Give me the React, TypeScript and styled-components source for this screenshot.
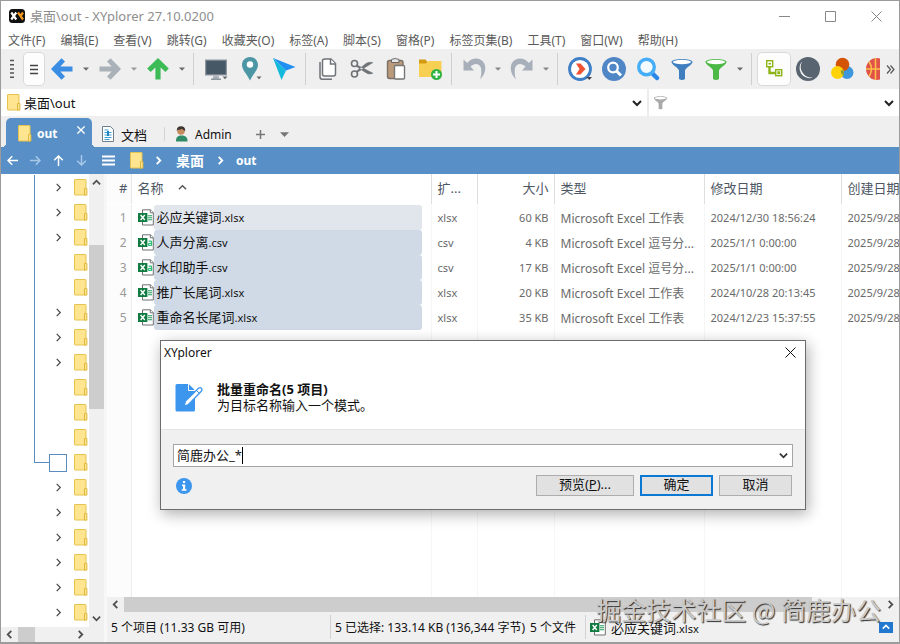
import React from "react";
import styled, { createGlobalStyle, css } from "styled-components";

const Global = createGlobalStyle`
  * { box-sizing: border-box; }
  body {
    margin: 0;
    font-family: "Noto Sans", "Noto Sans CJK SC", sans-serif;
    font-size: 12px;
    color: #111;
  }
  button, input { font: inherit; color: inherit; }
  button { padding: 0; border: 0; background: none; }
  svg { display: block; flex: none; }
`;

/* ---------- window frame ---------- */

const Window = styled.div`
  position: relative;
  display: flex;
  flex-direction: column;
  height: 100vh;
  border: 1px solid #9b9b9b;
  border-bottom-width: 2px;
  background: #fff;
  overflow: hidden;
`;

const TitleBar = styled.header`
  display: flex;
  align-items: center;
  height: 30px;
  flex: none;
  padding-left: 8px;
  color: #8e8e8e;
`;

const Title = styled.h1`
  flex: 1;
  margin: 0 0 0 5px;
  font-size: 13px;
  line-height: 16px;
  font-weight: 400;
`;

const CaptionButton = styled.button`
  display: flex;
  justify-content: center;
  align-items: center;
  width: 46px;
  height: 28px;
`;

const MenuBar = styled.nav`
  display: flex;
  align-items: flex-end;
  height: 18px;
  flex: none;
  padding-left: 7px;
  gap: 15px;
  color: #5a5a5a;
`;

const MenuItem = styled.button`
  white-space: nowrap;
  line-height: 16px;
`;

/* ---------- toolbar ---------- */

const Toolbar = styled.div`
  display: flex;
  align-items: center;
  height: 40px;
  flex: none;
  background: #efefef;
  overflow: hidden;
`;

const ToolButton = styled.button<{ $w?: number; $raised?: boolean }>`
  display: flex;
  align-items: center;
  justify-content: ${(p) => (p.$w === 21 ? "flex-start" : "center")};
  width: ${(p) => p.$w ?? 34}px;
  height: 34px;
  flex: none;
  overflow: hidden;
  ${(p) =>
    p.$w === 21 &&
    css`
      padding-left: 7px;
    `}
  ${(p) =>
    p.$raised &&
    css`
      background: #fdfdfd;
      border: 1px solid #d9d9d9;
      border-radius: 5px;
    `}
`;

const ToolSeparator = styled.span`
  width: 10px;
  height: 32px;
  flex: none;
  background: linear-gradient(#cfcfcf, #cfcfcf) 4px 0 / 1px 100% no-repeat;
`;

const Overflow = styled(ToolButton)`
  margin-left: auto;
  justify-content: center;
  color: #444;
`;

/* ---------- address row ---------- */

const AddressRow = styled.div`
  display: flex;
  height: 27px;
  flex: none;
  background: #fff;
`;

const Combo = styled.div<{ $grow?: boolean }>`
  display: flex;
  align-items: center;
  min-width: 0;
  flex: ${(p) => (p.$grow ? "1" : "0 0 252px")};
  padding: 0 4px 0 6px;
  gap: 3px;
  & + & {
    border-left: 2px solid #ececec;
    padding-left: 4px;
  }
`;

const ComboInput = styled.input`
  flex: 1;
  min-width: 0;
  border: 0;
  padding: 0 0 1px;
  outline: 0;
  background: none;
  font-size: 13px;
`;

const IconButton = styled.button<{ $w?: number }>`
  display: flex;
  align-items: center;
  justify-content: center;
  flex: none;
  width: ${(p) => p.$w ?? 12}px;
`;

/* ---------- tabs ---------- */

const TabStrip = styled.div`
  display: flex;
  align-items: flex-end;
  height: 31px;
  flex: none;
  padding-left: 5px;
  background: #efefef;
`;

const ActiveTab = styled.div`
  position: relative;
  display: flex;
  align-items: flex-start;
  width: 86px;
  height: 29px;
  padding: 0 7px 0 12px;
  border-radius: 5px 5px 0 0;
  background: #588fc6;
  color: #fff;
  &::before,
  &::after {
    content: "";
    position: absolute;
    bottom: 0;
    width: 4px;
    height: 4px;
  }
  &::before {
    right: 100%;
    background: radial-gradient(circle at 0 0, transparent 4px, #588fc6 4px);
  }
  &::after {
    left: 100%;
    background: radial-gradient(circle at 100% 0, transparent 4px, #588fc6 4px);
  }
`;

const TabButton = styled.button`
  display: flex;
  align-items: center;
  gap: 5px;
  height: 29px;
  white-space: nowrap;
`;

const ActiveTabButton = styled(TabButton)`
  flex: 1;
  height: 31px;
  font-weight: 700;
`;

const TabClose = styled.button`
  display: flex;
  margin-top: 8px;
`;

const IdleTab = styled(TabButton)<{ $w: number; $size: number; $divider?: boolean }>`
  width: ${(p) => p.$w}px;
  padding-left: 10px;
  padding-top: 3px;
  gap: 7px;
  font-size: ${(p) => p.$size}px;
  ${(p) =>
    p.$divider &&
    css`
      background: linear-gradient(#d4d4d4, #d4d4d4) right 9px / 1px 14px no-repeat;
    `}
`;

const StripButton = styled(IconButton)`
  height: 29px;
  padding-top: 3px;
`;

/* ---------- breadcrumb bar ---------- */

const CrumbBar = styled.nav`
  display: flex;
  align-items: center;
  height: 27px;
  flex: none;
  background: #588fc6;
  color: #fff;
`;

const Crumb = styled.button<{ $size: number }>`
  padding: 0 10px;
  font-size: ${(p) => p.$size}px;
  line-height: 18px;
  font-weight: 700;
`;

/* ---------- main area ---------- */

const Main = styled.main`
  display: flex;
  flex: 1;
  min-height: 0;
`;

const TreePane = styled.aside`
  display: grid;
  grid-template-columns: 88px 15px;
  grid-template-rows: minmax(0, 1fr) 15px;
  flex: none;
  width: 106px;
  background: linear-gradient(90deg, #fff 88px, #f0f0f0 88px 103px, #f7f7f7 103px);
`;

const Tree = styled.ul`
  margin: 0;
  padding: 1px 0 0;
  list-style: none;
  overflow: hidden;
`;

const TreeRow = styled.li`
  display: flex;
  align-items: center;
  height: 25px;
`;

const Guide = styled.span<{ $part: "line" | "elbow" | "none" }>`
  align-self: flex-start;
  width: 15px;
  margin-left: 33px;
  height: ${(p) => (p.$part === "line" ? 25 : 13)}px;
  border: 0 solid #5b8cc0;
  border-left-width: ${(p) => (p.$part === "none" ? 0 : 1)}px;
  border-bottom-width: ${(p) => (p.$part === "elbow" ? 1 : 0)}px;
`;

const Expander = styled.button<{ $box?: boolean }>`
  display: flex;
  align-items: center;
  justify-content: center;
  width: 18px;
  height: 18px;
  margin-right: 7px;
  border: ${(p) => (p.$box ? "1px solid #5b8cc0" : "0")};
`;

const NoExpander = styled.span`
  width: 18px;
  margin-right: 7px;
`;

const VScroll = styled.div`
  display: flex;
  flex-direction: column;
  background: #f0f0f0;
`;

const HScroll = styled.div`
  display: flex;
  height: 15px;
  flex: none;
  background: #f0f0f0;
`;

const Thumb = styled.div<{ $share: number }>`
  flex: ${(p) => p.$share};
  background: #cdcdcd;
`;

const Track = styled.div<{ $share: number }>`
  flex: ${(p) => p.$share};
`;

const ScrollButton = styled.button`
  display: flex;
  flex: 0 0 17px;
  align-items: center;
  justify-content: center;
`;

const ListPane = styled.section`
  display: flex;
  flex-direction: column;
  flex: 1;
  min-width: 0;
`;

const TableClip = styled.div`
  flex: 1;
  min-height: 0;
  overflow: hidden;
`;

const Table = styled.table`
  table-layout: fixed;
  width: 100%;
  height: 100%;
  border-collapse: collapse;
  color: #6a6a6a;
`;

const Th = styled.th<{ $right?: boolean }>`
  height: 30px;
  padding: 0 5px 3px 6px;
  border-right: 1px solid #dedede;
  text-align: ${(p) => (p.$right ? "right" : "left")};
  font-size: 13px;
  font-weight: 400;
  color: #4d5663;
  white-space: nowrap;
  &:first-child {
    padding-right: 3px;
    border-right-color: #e6e6e6;
    background: #fcfcfc;
  }
  &:last-child {
    padding-right: 0;
    border-right: 0;
  }
`;

const SortHead = styled.span`
  display: flex;
  align-items: center;
  gap: 14px;
`;

const Td = styled.td<{ $right?: boolean; $small?: boolean }>`
  height: 25px;
  padding: 0 5px 0 6px;
  border-right: 1px solid #f6f6f6;
  text-align: ${(p) => (p.$right ? "right" : "left")};
  font-size: ${(p) => (p.$small ? 11 : 12)}px;
  white-space: nowrap;
  &:first-child {
    padding: 0 4px 0 0;
    border-right-color: #ececec;
    background: #fcfcfc;
    color: #9a9a9a;
  }
  &:last-child {
    padding-right: 0;
    border-right: 0;
  }
`;

const NameCell = styled.div`
  display: flex;
  align-items: center;
  margin-right: 4px;
`;

const NameMark = styled.span<{ $focus?: boolean }>`
  flex: 1;
  height: 25px;
  padding-left: 3px;
  border-radius: 3px;
  line-height: 25px;
  color: #111;
  background: ${(p) => (p.$focus ? "#e1e5ec" : "#cfdae6")};
`;

const Stem = styled.span`
  font-size: 13px;
`;

const Extension = styled.span`
  font-size: 11px;
`;

const SpacerRow = styled.tr`
  height: 100%;
`;

const HeadGap = styled.tr`
  height: 1px;
`;

const StatusBar = styled.footer`
  display: flex;
  align-items: center;
  height: 30px;
  flex: none;
  background: #f0f0f0;
  white-space: nowrap;
`;

const StatusCell = styled.div<{ $w?: number; $line?: boolean }>`
  display: flex;
  align-items: center;
  gap: 5px;
  height: 24px;
  padding-left: 4px;
  flex: ${(p) => (p.$w ? `0 0 ${p.$w}px` : "1")};
  border-right: ${(p) => (p.$line ? "1px solid #d2d2d2" : "0")};
`;

const PanelToggle = styled.button`
  display: flex;
  align-items: center;
  justify-content: center;
  width: 14px;
  height: 11px;
  margin-right: 6px;
  background: #2277cf;
`;

/* ---------- dialog ---------- */

const Dialog = styled.div`
  position: absolute;
  left: 159px;
  right: 93px;
  top: 339px;
  border: 1px solid #6c6c6c;
  background: #f0f0f0;
  box-shadow: 2px 4px 14px rgba(0, 0, 0, 0.32);
`;

const DialogHead = styled.div`
  background: #fff;
  border-bottom: 1px solid #e4e4e4;
  padding-bottom: 14px;
`;

const DialogTitle = styled.div`
  display: flex;
  align-items: center;
  justify-content: space-between;
  height: 23px;
  padding: 0 9px 0 3px;
`;

const DialogMessage = styled.div`
  display: flex;
  align-items: center;
  gap: 14px;
  padding: 17px 0 0 14px;
`;

const Lines = styled.div`
  display: flex;
  flex-direction: column;
  line-height: 16px;
  font-size: 13px;
  height: 34px;
`;

const Strong = styled.h2`
  margin: 0;
  font-size: 13px;
  line-height: 16px;
  font-weight: 700;
`;

const Body = styled.div`
  padding: 14px 12px 13px;
`;

const PatternBox = styled.div`
  display: flex;
  align-items: center;
  height: 23px;
  padding: 0 3px;
  border: 1px solid #a5a5a5;
  background: #fff;
  font-size: 13px;
`;

const PatternInput = styled.input`
  field-sizing: content;
  height: 17px;
  padding: 0 0 3px;
  border: 0;
  border-right: 1px solid #000;
  outline: 0;
  background: none;
`;

const Actions = styled.div`
  display: flex;
  align-items: center;
  gap: 6px;
  padding: 8px 1px 0 3px;
`;

const Push = styled.button<{ $w: number; $default?: boolean }>`
  width: ${(p) => p.$w}px;
  height: 21px;
  padding-bottom: 3px;
  border: ${(p) => (p.$default ? "2px solid #0b78d4" : "1px solid #adadad")};
  background: #e1e1e1;
  line-height: 14px;
  font-size: 13px;
`;

const Spring = styled.span`
  flex: 1;
`;

const Watermark = styled.div`
  position: absolute;
  right: 18px;
  bottom: 15px;
  color: #cacaca;
  font-size: 25px;
  line-height: 36px;
  font-family: "Noto Sans CJK SC", sans-serif;
  text-shadow: 1px 1px 1px #2d2d2d;
  white-space: nowrap;
  pointer-events: none;
`;

/* ---------- drawings ---------- */

const Folder = () => (
  <svg width="14" height="17" viewBox="0 0 14 17">
    <rect x="0.5" y="0.5" width="11.5" height="15.5" rx="0.5" fill="#ffe590" stroke="#e6c34f" />
    <path d="M10.5 9.5h2.4v6.6h-2.4z" fill="#ffe590" stroke="#dfb93f" />
  </svg>
);

const Chevron = ({ dir, color = "#333", s = 9, w = 2 }: { dir: "up" | "down" | "left" | "right"; color?: string; s?: number; w?: number }) => {
  const d = { up: "M1 7l4-4 4 4", down: "M1 3l4 4 4-4", left: "M7 1L3 5l4 4", right: "M3 1l4 4-4 4" }[dir];
  return (
    <svg width={s} height={s} viewBox="0 0 10 10" fill="none" stroke={color} strokeWidth={w}>
      <path d={d} />
    </svg>
  );
};

const Caret = ({ color = "#6b6b6b", s = 6 }: { color?: string; s?: number }) => (
  <svg width={s} height={s} viewBox="0 0 6 6">
    <path d="M0 1.5h6L3 4.7z" fill={color} />
  </svg>
);

const Cross = ({ color, s, w = 1 }: { color: string; s: number; w?: number }) => (
  <svg width={s} height={s} viewBox="0 0 11 11" stroke={color} strokeWidth={w}>
    <path d="M.5.5l10 10M10.5.5l-10 10" />
  </svg>
);

const Arrow = ({ color, dir }: { color: string; dir: number }) => (
  <svg width="24" height="24" viewBox="0 0 24 24">
    <g transform={`rotate(${dir} 12 12)`}>
      <path d="M1 12L11.5 1.2 15 4.6 10.4 9.4H22.5V14.6H10.4L15 19.4 11.5 22.8z" fill={color} />
    </g>
  </svg>
);

const ThinArrow = ({ dir, faded }: { dir: number; faded?: boolean }) => (
  <svg width="11" height="11" viewBox="0 0 11 11" fill="none" stroke={faded ? "#a9c8e8" : "#fff"} strokeWidth="1.5">
    <path transform={`rotate(${dir} 5.5 5.5)`} d="M11 5.5H1M5.2 1.2L1 5.5l4.2 4.3" />
  </svg>
);

const Excel = ({ csv }: { csv?: boolean }) => (
  <svg width="16" height="17" viewBox="0 0 16 17">
    <path d="M4.5.8h8L15.3 3.6V16H4.5z" fill="#fff" stroke="#707070" />
    <path d="M12.3.8v3h3" fill="#fff" stroke="#707070" />
    {csv ? (
      <path d="M10.6 7.2h2.2q.8 0 .8.8v3.4h-2.2q-1 0-1-1t1-1h2.2" fill="none" stroke="#2fbf7a" strokeWidth="1.2" />
    ) : (
      <path d="M10 6.8h4M10 8.8h4M10 10.8h4" stroke="#1c9c5b" strokeWidth="1.1" />
    )}
    <rect x="0" y="4" width="9.4" height="9" fill="#107c41" />
    <path d="M2.6 6l4.2 5M6.8 6l-4.2 5" stroke="#fff" strokeWidth="1.4" />
  </svg>
);

const Funnel = ({ color, s = 24 }: { color: string; s?: number }) => (
  <svg width={s} height={s} viewBox="0 0 24 24">
    <path d="M1.5 5c0-4 21-4 21 0 0 2.5-7 6-7.500 8.500v8.500q-3 1.800-6 0v-8.500C8.500 11 1.500 7.500 1.500 5z" fill={color} />
    <ellipse cx="12" cy="5" rx="9.200" ry="2.200" fill="#fff" />
  </svg>
);

const AppLogo = () => (
  <svg width="16" height="14" viewBox="0 0 16 14">
    <rect width="16" height="14" rx="3.500" fill="#111" />
    <path d="M2.300 3.500l5 7M7.300 3.500l-5 7" stroke="#fff" strokeWidth="2.200" />
    <path d="M9 3.500l2.500 3.500 2.500 3.500M14 3.500l-2.500 3.500" stroke="#f39a1f" strokeWidth="2.200" fill="none" />
  </svg>
);

const Grip = () => (
  <svg width="4" height="20" viewBox="0 0 4 20" stroke="#555" strokeWidth="1.500">
    <path d="M0 1.500h4M0 5.700h4M0 9.900h4M0 14.100h4M0 18.300h4" />
  </svg>
);

const Lines3 = ({ color, w, h, sw }: { color: string; w: number; h: number; sw: number }) => (
  <svg width={w} height={h} viewBox="0 0 13 11" preserveAspectRatio="none" stroke={color} strokeWidth={sw}>
    <path d="M0 1.500h13M0 5.500h13M0 9.500h13" />
  </svg>
);

const Monitor = () => (
  <svg width="24" height="24" viewBox="0 0 24 24">
    <rect x="1" y="2.500" width="22" height="16" fill="#8e979f" />
    <rect x="2.200" y="3.700" width="19.600" height="13.600" fill="#465766" />
    <path d="M9.500 18.500h5l1 3.500h-7z" fill="#a9b1b7" />
    <path d="M7 22.300h10" stroke="#8d969d" strokeWidth="1.400" />
    <path d="M18.500 19.500h5l-2.500 2.700z" fill="#666" />
  </svg>
);

const Pin = () => (
  <svg width="24" height="24" viewBox="0 0 24 24">
    <path d="M12 0C7 0 4 3.800 4 8c0 5 5 9 8 15.500C15 17 20 13 20 8c0-4.200-3-8-8-8z" fill="#4c96a5" />
    <circle cx="12" cy="7.500" r="3.200" fill="#fff" />
    <path d="M18.500 19.500h5l-2.500 2.700z" fill="#666" />
  </svg>
);

const Pointer = () => (
  <svg width="24" height="24" viewBox="0 0 24 24">
    <path d="M1 1l22.500 9L14 13.500z" fill="#1f8ff2" />
    <path d="M1 1l13 12.500L9.500 23z" fill="#14b9dc" />
  </svg>
);

const Copy = () => (
  <svg width="24" height="24" viewBox="0 0 24 24" fill="#fff" stroke="#6f747a" strokeWidth="1.500">
    <path d="M4 5v15q0 2.200 2.200 2.200H16" fill="none" />
    <path d="M8.500 2h6.500l4.500 4.500V17q0 2-2 2H8.500q-2 0-2-2V4q0-2 2-2z" />
    <path d="M14.500 2v5h5" />
  </svg>
);

const Scissors = () => (
  <svg width="24" height="24" viewBox="0 0 24 24" fill="none" stroke="#6d7277">
    <circle cx="4.500" cy="6.500" r="3" strokeWidth="1.600" />
    <circle cx="4.500" cy="17" r="3" strokeWidth="1.600" />
    <path d="M7 8l16 8.300q-4 1.800-7-.5L6.500 9.500zM7 15.500L23 5.500q-4.500-1-7 1L6.500 14z" fill="#6d7277" strokeWidth=".5" />
  </svg>
);

const Paste = () => (
  <svg width="24" height="24" viewBox="0 0 24 24">
    <rect x="3.500" y="3.500" width="15.500" height="18" rx="2" fill="#b99a7b" stroke="#7b7168" strokeWidth="1.400" />
    <path d="M7.500 5.500V3q0-1 1-1h1.500q1-1.600 2.500 0H14q1 0 1 1v2.500z" fill="#e6e6e6" stroke="#666" />
    <rect x="10.500" y="8.500" width="10" height="13.500" rx="1" fill="#fff" stroke="#777" strokeWidth="1.400" />
  </svg>
);

const NewFolder = () => (
  <svg width="24" height="24" viewBox="0 0 24 24">
    <path d="M1 2.500h6.500L9.500 5v4H1z" fill="#d39a12" />
    <path d="M1 6.500h7L10 4h13.500v16H1z" fill="#f7cf52" />
    <circle cx="18.500" cy="17.500" r="5.500" fill="#2fb344" />
    <path d="M18.500 14v7M15 17.500h7" stroke="#fff" strokeWidth="2" />
  </svg>
);

const Undo = ({ flip }: { flip?: boolean }) => (
  <svg width="24" height="24" viewBox="0 0 24 24">
    <g transform={flip ? "translate(24 0) scale(-1 1)" : undefined}>
      <path d="M1.500 2.500v11h10.500L8.500 9.500C12 6 17 6 18.800 10.500c1 3.500.5 8-.8 12 5-4.500 6.500-11.500 4.300-16C19 .5 10.500-.5 5.200 6z" fill="#a7afba" />
    </g>
  </svg>
);

const GoCircle = () => (
  <svg width="24" height="24" viewBox="0 0 24 24">
    <circle cx="12" cy="12" r="10.500" fill="#fff" stroke="#3f7fc6" strokeWidth="2.800" />
    <path d="M8 6.500h4.500l5 5.500-5 5.500H8l3.500-5.500z" fill="#ef5434" />
    <path d="M18.500 20h5.500l-2.700 3z" fill="#444" />
  </svg>
);

const SearchDisc = () => (
  <svg width="24" height="24" viewBox="0 0 24 24" fill="none" stroke="#fff">
    <circle cx="12" cy="12" r="12" fill="#4f86c6" stroke="none" />
    <circle cx="11" cy="10.500" r="4.800" strokeWidth="2.200" />
    <path d="M14.500 14l4.500 4.500" strokeWidth="3" />
  </svg>
);

const Magnifier = () => (
  <svg width="24" height="24" viewBox="0 0 24 24" fill="none">
    <path d="M16 16l5 5" stroke="#2c86e6" strokeWidth="4.500" strokeLinecap="round" />
    <circle cx="10.500" cy="10" r="7.800" fill="#f4fbff" stroke="#46adf8" strokeWidth="3.400" />
  </svg>
);

const TreeIcon = () => (
  <svg width="20" height="20" viewBox="0 0 20 20" fill="none" stroke="#8db316" strokeWidth="1.400">
    <rect x="2.700" y="1.700" width="6" height="6" />
    <path d="M4.500 4.700h2.500" />
    <path d="M5.500 8v6h6" strokeWidth="2.400" />
    <rect x="11.700" y="10.700" width="6" height="6" />
    <rect x="14" y="13" width="1.500" height="1.500" />
  </svg>
);

const Moon = () => (
  <svg width="24" height="24" viewBox="0 0 24 24">
    <circle cx="12" cy="12" r="12" fill="#596471" />
    <path d="M6.500 4A10 10 0 0 0 17 20.500 10.800 10.800 0 0 1 6.500 4z" fill="#f4f4f4" />
  </svg>
);

const Balls = () => (
  <svg width="24" height="24" viewBox="0 0 24 24">
    <circle cx="17" cy="15.500" r="6.500" fill="#3c97dc" />
    <circle cx="12.500" cy="7.500" r="6.800" fill="#d45406" />
    <circle cx="7.500" cy="15.500" r="6.500" fill="#ffd208" />
    <path d="M13.200 12.500a6.500 6.500 0 0 1 0 6 6.500 6.500 0 0 1-2.600-4.500z" fill="#8a9f35" />
  </svg>
);

const Basketball = () => (
  <svg width="22" height="22" viewBox="0 0 22 22" fill="none" stroke="#ffc04a" strokeWidth="1.500">
    <circle cx="11" cy="11" r="11" fill="#df5348" stroke="none" />
    <path d="M0 11h22M9.500 0v22M3 3.500q5 7.500 0 15M19 3.500q-5 7.500 0 15" />
  </svg>
);

const DocIcon = () => (
  <svg width="12" height="16" viewBox="0 0 12 16" fill="none">
    <path d="M.5.500h8l3 3v12H.5z" fill="#fff" stroke="#6d7f8c" />
    <path d="M2.500 4h4M2.500 6.500h7M2.500 9h7M2.500 11.500h7M2.500 13.500h5" stroke="#3d9fd0" />
    <path d="M6 5v5" stroke="#1f86c0" strokeWidth="2" />
  </svg>
);

const UserIcon = () => (
  <svg width="13" height="16" viewBox="0 0 13 16">
    <path d="M1 15.500q-.5-5 4-6h3q5 1 4.500 6z" fill="#2f8b67" />
    <circle cx="6" cy="5" r="3.800" fill="#c58a5e" />
    <path d="M1.800 5Q1.500.2 6 .2T10.200 5Q8 4.200 7 2.800 5 4 3 3.800z" fill="#3b3430" />
  </svg>
);

const RenameIcon = () => (
  <svg width="28" height="28" viewBox="0 0 28 28">
    <path d="M2 0h11.500L20 6.500V26q0 1.500-1.500 1.500H2Q.5 27.500.5 26V1.500Q.5 0 2 0z" fill="#3d96ee" />
    <path d="M13.500 0v6.500H20" fill="#3d96ee" stroke="#fff" />
    <path d="M9 22l1.500-5L23.500 4.200q1.800-1.200 3 .2 1 1.500-.2 2.800L13.500 20.500z" fill="#fff" stroke="#3d96ee" strokeWidth="1.300" />
    <path d="M21.500 6.500l3 3" stroke="#3d96ee" />
  </svg>
);

const InfoIcon = () => (
  <svg width="16" height="16" viewBox="0 0 16 16">
    <circle cx="8" cy="8" r="8" fill="#3d96ee" />
    <path d="M7 3h2.200v2H7zM6 6.500h3.200v4.700h1.300v1.500H5.700v-1.500H7V8H6z" fill="#fff" />
  </svg>
);

/* ---------- data ---------- */

const menus = ["文件(F)", "编辑(E)", "查看(V)", "跳转(G)", "收藏夹(O)", "标签(A)", "脚本(S)", "窗格(P)", "标签页集(B)", "工具(T)", "窗口(W)", "帮助(H)"];

type Tool = { label: string; icon: React.ReactNode; w?: number; raised?: boolean } | "sep";

const drop = (label: string, color?: string): Tool => ({ label, icon: <Caret color={color} />, w: 14 });

const tools: Tool[] = [
  { label: "移动", icon: <Grip />, w: 22 },
  { label: "菜单", icon: <Lines3 color="#444" w={8} h={11} sw={1.5} />, w: 22, raised: true },
  { label: "后退", icon: <Arrow color="#3b8de4" dir={0} /> },
  drop("后退历史"),
  { label: "前进", icon: <Arrow color="#aab1b8" dir={180} /> },
  drop("前进历史", "#999"),
  { label: "向上", icon: <Arrow color="#3dbb57" dir={90} /> },
  drop("上级列表"),
  "sep",
  { label: "此电脑", icon: <Monitor /> },
  { label: "位置", icon: <Pin /> },
  { label: "转到", icon: <Pointer /> },
  "sep",
  { label: "复制", icon: <Copy /> },
  { label: "剪切", icon: <Scissors /> },
  { label: "粘贴", icon: <Paste /> },
  { label: "新建文件夹", icon: <NewFolder /> },
  "sep",
  { label: "撤销", icon: <Undo /> },
  drop("撤销历史", "#888"),
  { label: "重做", icon: <Undo flip /> },
  drop("重做历史", "#888"),
  "sep",
  { label: "快速跳转", icon: <GoCircle /> },
  { label: "查找", icon: <SearchDisc /> },
  { label: "搜索", icon: <Magnifier /> },
  { label: "筛选", icon: <Funnel color="#3f7fc0" /> },
  { label: "可视筛选", icon: <Funnel color="#4cb845" /> },
  drop("筛选列表"),
  "sep",
  { label: "文件夹树", icon: <TreeIcon />, raised: true },
  { label: "深色模式", icon: <Moon /> },
  { label: "颜色筛选", icon: <Balls /> },
  { label: "球", icon: <Basketball />, w: 21 },
];

const treeRows = ["c", "c", "c", "", "", "c", "c", "c", "", "", "", "box", "c", "c", "c", "c", "c", "c"];

const files = [
  { stem: "必应关键词", ext: "xlsx", size: "60 KB", type: "Microsoft Excel 工作表", date: "2024/12/30 18:56:24" },
  { stem: "人声分离", ext: "csv", size: "4 KB", type: "Microsoft Excel 逗号分...", date: "2025/1/1 0:00:00" },
  { stem: "水印助手", ext: "csv", size: "17 KB", type: "Microsoft Excel 逗号分...", date: "2025/1/1 0:00:00" },
  { stem: "推广长尾词", ext: "xlsx", size: "20 KB", type: "Microsoft Excel 工作表", date: "2024/10/28 20:13:45" },
  { stem: "重命名长尾词", ext: "xlsx", size: "35 KB", type: "Microsoft Excel 工作表", date: "2024/12/23 15:37:55" },
];

const columnWidths = [24, 300, 46, 77, 150, 137, undefined];

const FileName = ({ stem, ext }: { stem: string; ext: string }) => (
  <span>
    <Stem>{stem}</Stem>
    <Extension>.{ext}</Extension>
  </span>
);

/* ---------- page ---------- */

export default function App() {
  return (
    <>
      <Global />
      <Window>
        <TitleBar>
          <AppLogo />
          <Title>桌面\out - XYplorer 27.10.0200</Title>
          <CaptionButton aria-label="最小化">
            <svg width="11" height="11" viewBox="0 0 11 11" stroke="#888"><path d="M0 5.500h11" /></svg>
          </CaptionButton>
          <CaptionButton aria-label="最大化">
            <svg width="11" height="11" viewBox="0 0 11 11" fill="none" stroke="#888"><path d="M.5.500h10v10H.5z" /></svg>
          </CaptionButton>
          <CaptionButton aria-label="关闭">
            <Cross color="#888" s={11} />
          </CaptionButton>
        </TitleBar>

        <MenuBar>
          {menus.map((m) => (
            <MenuItem key={m}>{m}</MenuItem>
          ))}
        </MenuBar>

        <Toolbar>
          {tools.map((t, i) =>
            t === "sep" ? (
              <ToolSeparator key={i} />
            ) : (
              <ToolButton key={i} aria-label={t.label} $w={t.w} $raised={t.raised}>
                {t.icon}
              </ToolButton>
            )
          )}
          <Overflow $w={17} aria-label="更多">
            <svg width="9" height="9" viewBox="0 0 9 9" fill="none" stroke="#555" strokeWidth="1.200"><path d="M1 .5l3.500 4L1 8.500M4.500.5l3.500 4-3.500 4" /></svg>
          </Overflow>
        </Toolbar>

        <AddressRow>
          <Combo $grow>
            <Folder />
            <ComboInput aria-label="地址" defaultValue="桌面\out" />
            <IconButton aria-label="地址列表"><Chevron dir="down" s={10} color="#222" /></IconButton>
          </Combo>
          <Combo>
            <Funnel color="#a9a9a9" s={15} />
            <ComboInput aria-label="筛选" />
            <IconButton aria-label="筛选列表"><Chevron dir="down" s={10} color="#222" /></IconButton>
          </Combo>
        </AddressRow>

        <TabStrip>
          <ActiveTab>
            <ActiveTabButton role="tab" aria-selected="true"><Folder />out</ActiveTabButton>
            <TabClose aria-label="关闭标签"><Cross color="#fff" s={8} w={1.8} /></TabClose>
          </ActiveTab>
          <IdleTab role="tab" $w={73} $size={13} $divider><DocIcon />文档</IdleTab>
          <IdleTab role="tab" $w={83} $size={12}><UserIcon />Admin</IdleTab>
          <StripButton $w={24} aria-label="新建标签">
            <svg width="9" height="9" viewBox="0 0 9 9" stroke="#777" strokeWidth="1.500"><path d="M0 4.500h9M4.500 0v9" /></svg>
          </StripButton>
          <StripButton $w={24} aria-label="标签列表"><Caret s={9} color="#777" /></StripButton>
        </TabStrip>

        <CrumbBar>
          <IconButton $w={23} aria-label="后退"><ThinArrow dir={0} /></IconButton>
          <IconButton $w={23} aria-label="前进"><ThinArrow dir={180} faded /></IconButton>
          <IconButton $w={23} aria-label="向上"><ThinArrow dir={90} /></IconButton>
          <IconButton $w={23} aria-label="向下"><ThinArrow dir={270} faded /></IconButton>
          <IconButton $w={31} aria-label="菜单"><Lines3 color="#fff" w={13} h={11} sw={1.8} /></IconButton>
          <IconButton $w={26} aria-label="文件夹"><Folder /></IconButton>
          <IconButton $w={16} aria-label="展开"><Chevron dir="right" color="#fff" s={9} /></IconButton>
          <Crumb $size={14}>桌面</Crumb>
          <IconButton aria-label="展开"><Chevron dir="right" color="#fff" s={9} /></IconButton>
          <Crumb $size={12}>out</Crumb>
        </CrumbBar>

        <Main>
          <TreePane>
            <Tree>
              {treeRows.map((kind, i) => (
                <TreeRow key={i}>
                  <Guide $part={i < 11 ? "line" : i === 11 ? "elbow" : "none"} />
                  {kind === "c" && <Expander aria-label="展开"><Chevron dir="right" s={9} w={1.3} color="#444" /></Expander>}
                  {kind === "box" && <Expander $box aria-label="展开" />}
                  {kind === "" && <NoExpander />}
                  <Folder />
                </TreeRow>
              ))}
            </Tree>
            <VScroll>
              <ScrollButton aria-label="向上滚动"><Chevron dir="up" color="#505050" /></ScrollButton>
              <Track $share={54} />
              <Thumb $share={164} />
              <Track $share={201} />
              <ScrollButton aria-label="向下滚动"><Chevron dir="down" color="#505050" /></ScrollButton>
            </VScroll>
            <HScroll>
              <ScrollButton aria-label="向左滚动"><Chevron dir="left" color="#505050" /></ScrollButton>
              <Thumb $share={17} />
              <Track $share={37} />
              <ScrollButton aria-label="向右滚动"><Chevron dir="right" color="#505050" /></ScrollButton>
            </HScroll>
          </TreePane>

          <ListPane>
            <TableClip>
              <Table>
                <colgroup>
                  {columnWidths.map((w, i) => (
                    <col key={i} width={w} />
                  ))}
                </colgroup>
                <thead>
                  <tr>
                    <Th $right>#</Th>
                    <Th><SortHead>名称<Chevron dir="up" w={1.6} color="#555" /></SortHead></Th>
                    <Th>扩...</Th>
                    <Th $right>大小</Th>
                    <Th>类型</Th>
                    <Th>修改日期</Th>
                    <Th>创建日期</Th>
                  </tr>
                </thead>
                <tbody>
                  <HeadGap />
                  {files.map((f, i) => (
                    <tr key={f.stem}>
                      <Td $right>{i + 1}</Td>
                      <Td>
                        <NameCell>
                          <Excel csv={f.ext === "csv"} />
                          <NameMark $focus={i === 0}><FileName stem={f.stem} ext={f.ext} /></NameMark>
                        </NameCell>
                      </Td>
                      <Td $small>{f.ext}</Td>
                      <Td $right $small>{f.size}</Td>
                      <Td>{f.type}</Td>
                      <Td $small>{f.date}</Td>
                      <Td $small>2025/9/28</Td>
                    </tr>
                  ))}
                  <SpacerRow>
                    {columnWidths.map((_, i) => (
                      <Td key={i} />
                    ))}
                  </SpacerRow>
                </tbody>
              </Table>
            </TableClip>
            <HScroll>
              <ScrollButton aria-label="向左滚动"><Chevron dir="left" color="#505050" /></ScrollButton>
              <Thumb $share={688} />
              <Track $share={70} />
              <ScrollButton aria-label="向右滚动"><Chevron dir="right" color="#505050" /></ScrollButton>
            </HScroll>
            <StatusBar>
              <StatusCell $w={224} $line>5 个项目 (11.33 GB 可用)</StatusCell>
              <StatusCell $w={255} $line>
                <span>5 已选择: 133.14 KB (136,344 字节)</span>
                <span>5 个文件</span>
              </StatusCell>
              <StatusCell><Excel /><FileName stem="必应关键词" ext="xlsx" /></StatusCell>
              <PanelToggle aria-label="信息面板"><Chevron dir="up" color="#fff" s={8} /></PanelToggle>
            </StatusBar>
          </ListPane>
        </Main>

        <Dialog role="dialog" aria-label="XYplorer">
          <DialogHead>
            <DialogTitle>
              XYplorer
              <IconButton aria-label="关闭"><Cross color="#111" s={11} /></IconButton>
            </DialogTitle>
            <DialogMessage>
              <RenameIcon />
              <Lines>
                <Strong>批量重命名(5 项目)</Strong>
                <span>为目标名称输入一个模式。</span>
              </Lines>
            </DialogMessage>
          </DialogHead>
          <Body>
            <PatternBox>
              <PatternInput aria-label="模式" defaultValue="简鹿办公_*" />
              <Spring />
              <IconButton aria-label="模式列表"><Chevron dir="down" s={9} /></IconButton>
            </PatternBox>
            <Actions>
              <InfoIcon />
              <Spring />
              <Push $w={98}>预览(<u>P</u>)...</Push>
              <Push $w={73} $default>确定</Push>
              <Push $w={73}>取消</Push>
            </Actions>
          </Body>
        </Dialog>

        <Watermark>掘金技术社区 @ 简鹿办公</Watermark>
      </Window>
    </>
  );
}
